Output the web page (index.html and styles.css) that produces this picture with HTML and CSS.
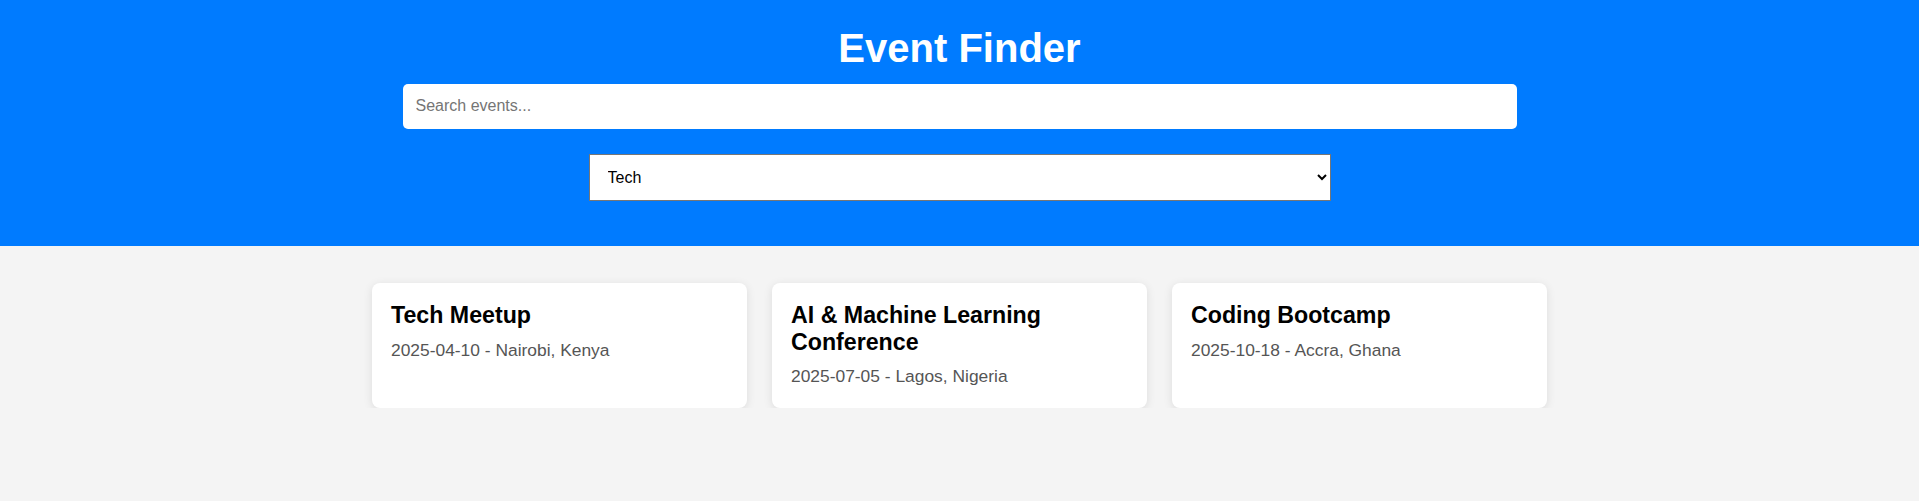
FILE: index.html
```html
<!DOCTYPE html>
<html lang="en">
<head>
<meta charset="utf-8">
<title>Event Finder</title>
<link rel="stylesheet" href="styles.css">
</head>
<body>
<header class="header">
  <h1 class="title">Event Finder</h1>
  <input class="search" type="text" placeholder="Search events...">
  <select class="filter">
    <option>Tech</option>
    <option>Music</option>
    <option>Sports</option>
  </select>
</header>
<main class="events">
  <div class="card">
    <h3 class="card-title">Tech Meetup</h3>
    <p class="card-meta">2025-04-10 - Nairobi, Kenya</p>
  </div>
  <div class="card">
    <h3 class="card-title">AI &amp; Machine Learning Conference</h3>
    <p class="card-meta">2025-07-05 - Lagos, Nigeria</p>
  </div>
  <div class="card">
    <h3 class="card-title">Coding Bootcamp</h3>
    <p class="card-meta">2025-10-18 - Accra, Ghana</p>
  </div>
</main>
</body>
</html>
```

FILE: styles.css
```css
html, body {
  margin: 0;
  padding: 0;
}
body {
  font-family: Arial, "Liberation Sans", sans-serif;
  background: #f4f4f4;
}
.header {
  background: #007bff;
  color: #fff;
  display: flex;
  flex-direction: column;
  align-items: center;
  padding: 25px 0 45px;
}
.title {
  margin: 0;
  font-size: 40px;
  line-height: 46px;
  font-weight: bold;
}
.search {
  box-sizing: border-box;
  width: 1114px;
  height: 45px;
  margin-top: 13px;
  border: none;
  border-radius: 5px;
  padding: 0 12px 1px 13px;
  font-family: Arial, "Liberation Sans", sans-serif;
  font-size: 16px;
  color: #000;
  background: #fff;
  outline: none;
}
.search::placeholder {
  color: #757575;
}
.filter {
  box-sizing: border-box;
  width: 742px;
  height: 47px;
  margin-top: 25px;
  border: 1px solid #767676;
  border-radius: 0;
  padding: 0 10px 0 14px;
  font-family: Arial, "Liberation Sans", sans-serif;
  font-size: 16px;
  color: #000;
  background: #fff;
}
.events {
  display: flex;
  justify-content: center;
  align-items: stretch;
  gap: 25px;
  padding-top: 37px;
}
.card {
  box-sizing: border-box;
  width: 375px;
  background: #fff;
  border-radius: 8px;
  box-shadow: 0 2px 10px rgba(0, 0, 0, 0.1);
  padding: 19px 19px 22px;
}
.card-title {
  margin: 0 0 11px;
  font-size: 23.2px;
  line-height: 26.7px;
  font-weight: bold;
  color: #000;
}
.card-meta {
  margin: 0;
  font-size: 17.4px;
  line-height: 20px;
  color: #555;
}
```
